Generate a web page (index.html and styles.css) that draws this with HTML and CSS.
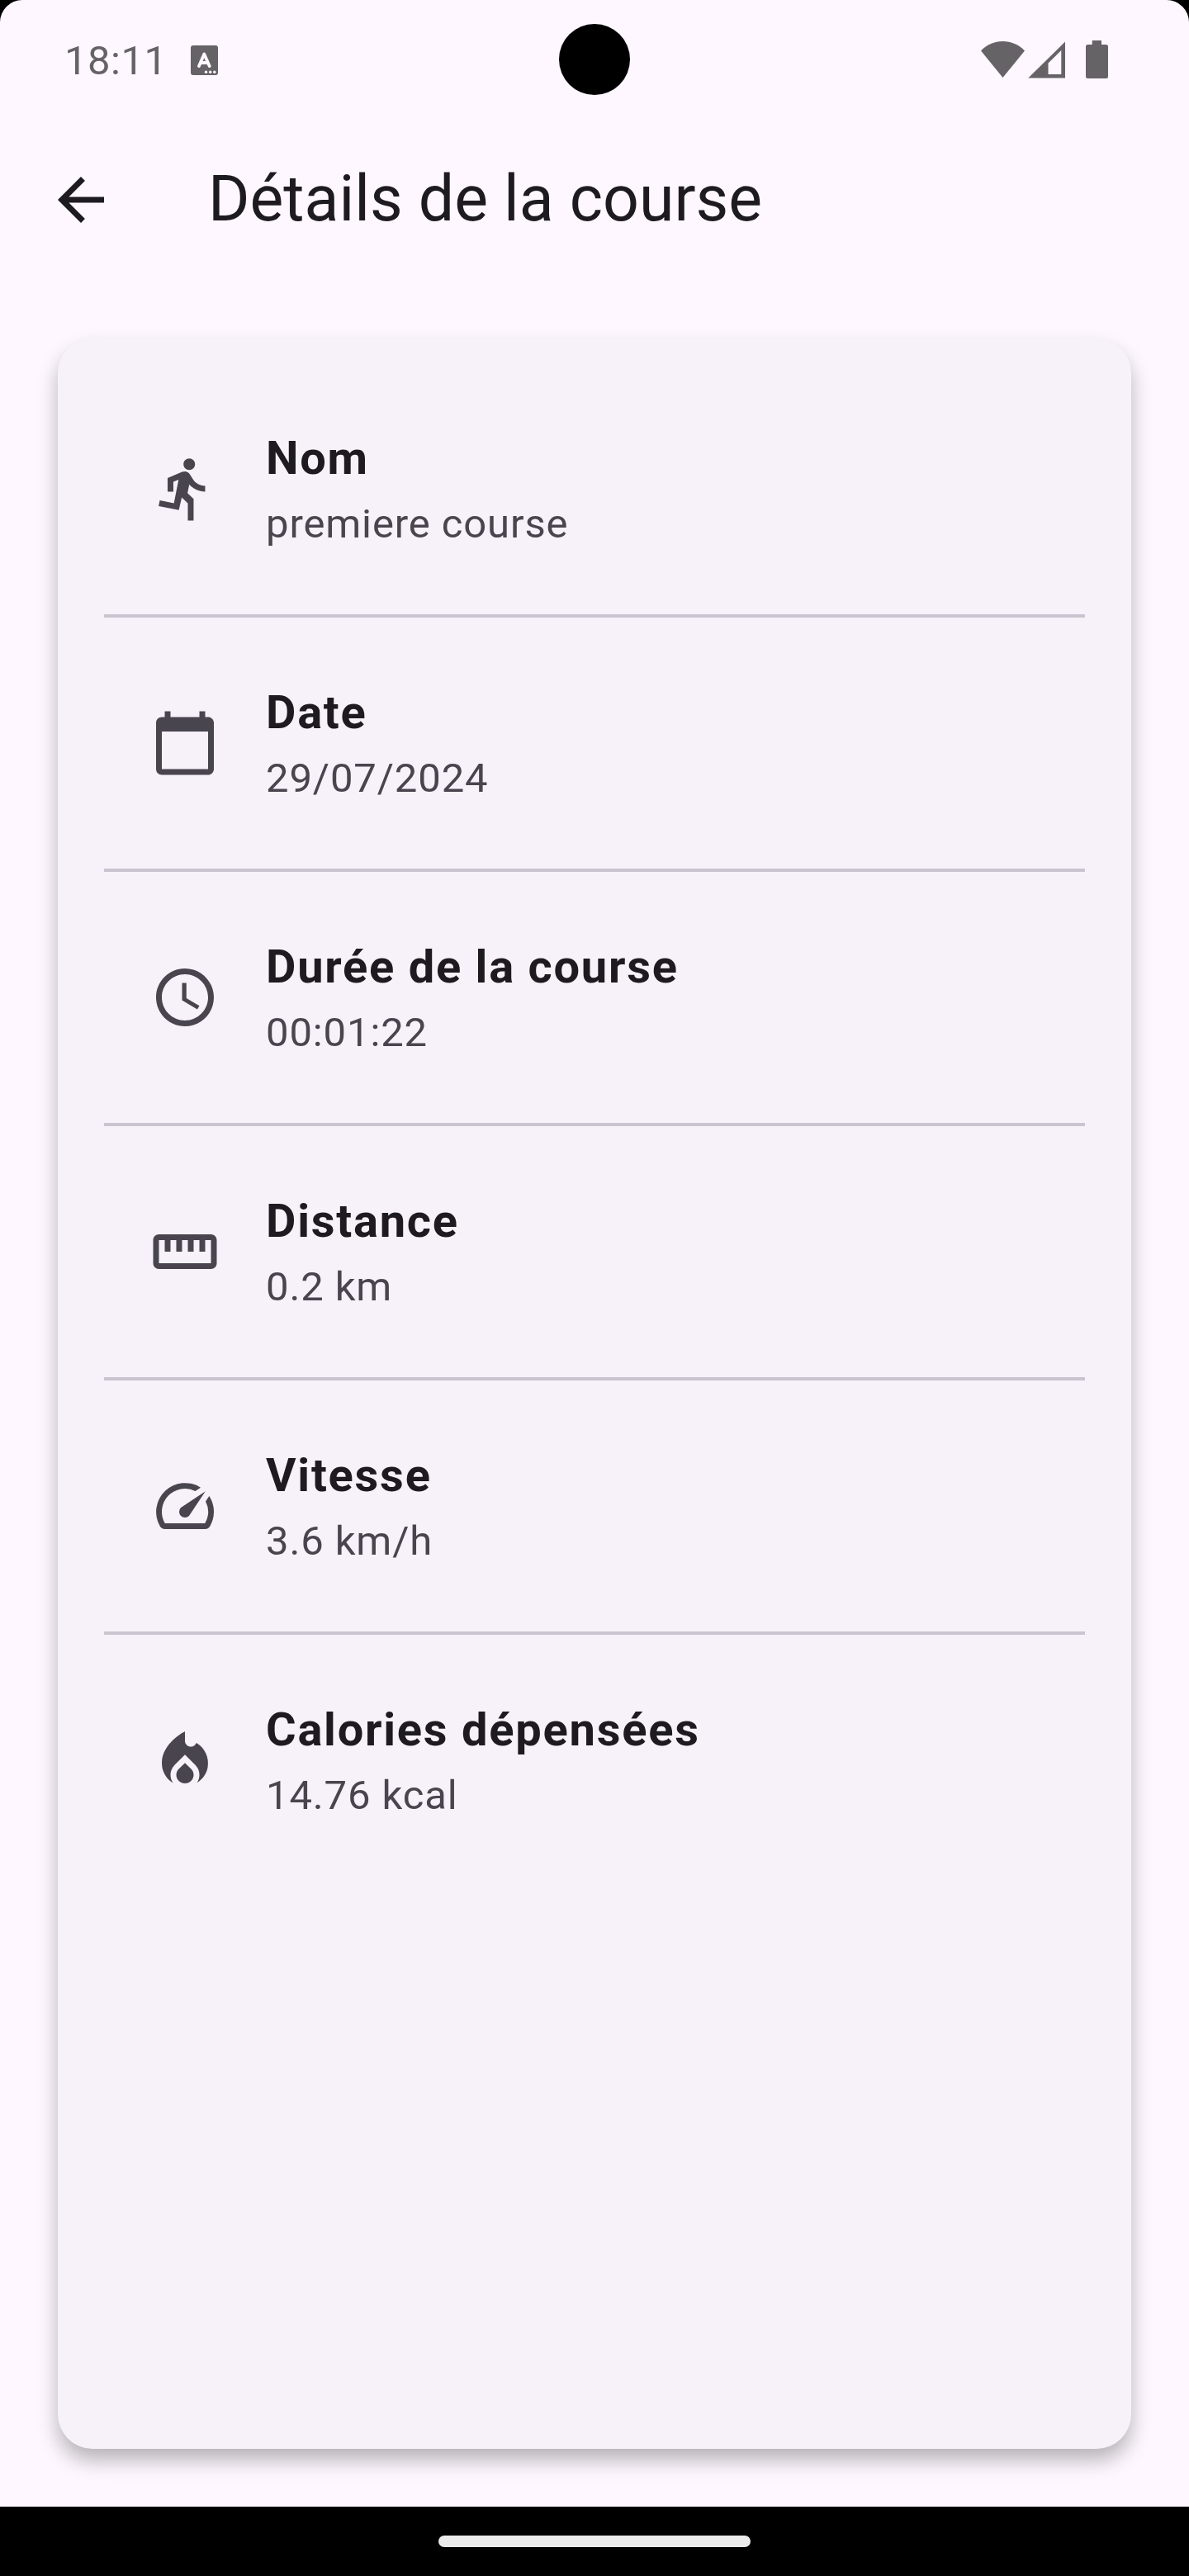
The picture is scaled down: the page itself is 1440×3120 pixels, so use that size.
FILE: index.html
```html
<!DOCTYPE html>
<html lang="fr">
<head>
<meta charset="utf-8">
<title>Détails de la course</title>
<link rel="stylesheet" href="styles.css">
</head>
<body>
<div class="phone">
  <main class="screen">
    <div class="camera"></div>
    <div class="status-bar">
      <span class="clock">18:11</span>
      <svg class="notif-icon" viewBox="0 0 33 36"><rect width="33" height="36" rx="3"/><path class="stroke" d="M10 25 16.3 10.500 22.700 25M12.500 21H20"/><g class="dots"><circle cx="18.500" cy="32.200" r="1.700"/><circle cx="23.700" cy="32.200" r="1.700"/><circle cx="28.800" cy="32.200" r="1.700"/></g></svg>
      <svg class="system-icons" viewBox="0 0 156 48">
        <path d="M0 13.500C7 6 16.500 2 26.500 2S46 6 53 13.500L26.500 46Z"/>
        <path fill-rule="evenodd" d="M57.300 46.600H102V2.600ZM81.500 28.500V42H97.300V13Z"/>
        <path d="M134.700 1H146V6H151.500Q154 6 154 8.500V44.500Q154 47 151.500 47H129.500Q127 47 127 44.500V8.500Q127 6 129.500 6H134.700Z"/>
      </svg>
    </div>
    <header class="app-bar">
      <svg class="icon back" viewBox="0 0 24 24"><path d="M20 11H7.830l5.590-5.590L12 4l-8 8 8 8 1.410-1.410L7.830 13H20v-2z"/></svg>
      <h1 class="page-title">Détails de la course</h1>
    </header>
    <section class="card">
      <div class="row">
        <svg class="icon" viewBox="0 0 24 24"><path d="M13.490 5.480c1.100 0 2-.9 2-2s-.9-2-2-2-2 .9-2 2 .9 2 2 2zm-3.600 13.900l1-4.400 2.100 2v6h2v-7.500l-2.100-2 .6-3c1.300 1.500 3.300 2.500 5.500 2.500v-2c-1.900 0-3.500-1-4.300-2.400l-1-1.600c-.4-.6-1-1-1.700-1-.3 0-.5.1-.8.1l-5.200 2.200v4.700h2v-3.400l1.800-.7-1.600 8.100-4.900-1-.4 2 7 1.400z"/></svg>
        <div class="texts"><div class="label">Nom</div><div class="value">premiere course</div></div>
      </div>
      <div class="divider"></div>
      <div class="row">
        <svg class="icon" viewBox="0 0 24 24"><path d="M20 3h-1V1h-2v2H7V1H5v2H4c-1.100 0-2 .9-2 2v16c0 1.100.9 2 2 2h16c1.100 0 2-.9 2-2V5c0-1.100-.9-2-2-2zm0 18H4V8h16v13z"/></svg>
        <div class="texts"><div class="label">Date</div><div class="value">29/07/2024</div></div>
      </div>
      <div class="divider"></div>
      <div class="row">
        <svg class="icon" viewBox="0 0 24 24"><path d="M11.990 2C6.470 2 2 6.480 2 12s4.470 10 9.990 10C17.520 22 22 17.520 22 12S17.520 2 11.990 2zM12 20c-4.420 0-8-3.580-8-8s3.580-8 8-8 8 3.580 8 8-3.580 8-8 8zm.5-13H11v6l5.250 3.150.75-1.230-4.500-2.670z"/></svg>
        <div class="texts"><div class="label">Durée de la course</div><div class="value">00:01:22</div></div>
      </div>
      <div class="divider"></div>
      <div class="row">
        <svg class="icon" viewBox="0 0 24 24"><path d="M21 6H3c-1.100 0-2 .9-2 2v8c0 1.100.9 2 2 2h18c1.100 0 2-.9 2-2V8c0-1.100-.9-2-2-2zm0 10H3V8h2v4h2V8h2v4h2V8h2v4h2V8h2v4h2V8h2v8z"/></svg>
        <div class="texts"><div class="label">Distance</div><div class="value">0.2 km</div></div>
      </div>
      <div class="divider"></div>
      <div class="row">
        <svg class="icon" viewBox="0 0 24 24"><path d="M20.380 8.570l-1.230 1.850a8 8 0 0 1-.22 7.580H5.070A8 8 0 0 1 15.580 6.850l1.850-1.230A10 10 0 0 0 3.350 19a2 2 0 0 0 1.720 1h13.850a2 2 0 0 0 1.740-1 10 10 0 0 0-.27-10.440zm-9.790 6.840a2 2 0 0 0 2.830 0l5.660-8.490-8.490 5.660a2 2 0 0 0 0 2.830z"/></svg>
        <div class="texts"><div class="label">Vitesse</div><div class="value">3.6 km/h</div></div>
      </div>
      <div class="divider"></div>
      <div class="row">
        <svg class="icon" viewBox="0 0 24 24"><path d="M12 12.900l-2.130 2.090c-.56.560-.87 1.290-.87 2.070C9 18.680 10.350 20 12 20s3-1.320 3-2.940c0-.78-.31-1.520-.87-2.070L12 12.900z"/><path d="M16 6l-.44.550C14.380 8.020 12 7.190 12 5.300V2S4 6 4 13c0 2.920 1.560 5.470 3.890 6.860-.56-.79-.89-1.760-.89-2.800 0-1.320.52-2.560 1.470-3.500L12 10.100l3.530 3.470c.95.930 1.470 2.170 1.470 3.500 0 1.020-.31 1.960-.85 2.750 1.890-1.150 3.290-3.060 3.710-5.300.66-3.550-1.070-6.900-3.860-8.520z"/></svg>
        <div class="texts"><div class="label">Calories dépensées</div><div class="value">14.76 kcal</div></div>
      </div>
    </section>
  </main>
  <footer class="nav-bar"><div class="nav-handle"></div></footer>
</div>
</body>
</html>
```
FILE: styles.css
```css
* {
  box-sizing: border-box;
}

body {
  margin: 0;
  background: #000;
  font-family: Roboto, "Liberation Sans", sans-serif;
  color: #1d1b20;
}

.phone {
  display: flex;
  flex-direction: column;
  width: 1440px;
  height: 3120px;
  background: #000;
}

.screen {
  position: relative;
  flex: 1;
  display: flex;
  flex-direction: column;
  background: #fef7ff;
  border-radius: 27px 27px 0 0;
}

.camera {
  position: absolute;
  top: 29px;
  left: 677px;
  width: 86px;
  height: 86px;
  border-radius: 50%;
  background: #000;
}

.status-bar {
  display: flex;
  align-items: flex-start;
  height: 144px;
  padding: 48px 96px 0 78px;
  color: #666367;
  fill: #666367;
}

.clock {
  width: 153px;
  font-size: 49px;
  line-height: 52px;
  letter-spacing: 0.5px;
}

.notif-icon {
  width: 33px;
  height: 36px;
  margin-top: 7px;
}

.notif-icon .stroke {
  fill: none;
  stroke: #fef7ff;
  stroke-width: 3.8;
  stroke-linecap: round;
  stroke-linejoin: round;
}

.notif-icon .dots {
  fill: #fef7ff;
}

.system-icons {
  width: 156px;
  height: 48px;
  margin-left: auto;
}

.app-bar {
  display: flex;
  align-items: center;
  height: 196px;
  padding-left: 56px;
}

.icon {
  flex: none;
  width: 84px;
  height: 84px;
  fill: #49454f;
}

.icon.back {
  fill: #1d1b20;
}

.page-title {
  margin: 0 0 2px 112px;
  font-size: 77px;
  font-weight: 400;
  line-height: 98px;
}

.card {
  flex: 1;
  margin: 70px;
  padding: 56px;
  border-radius: 42px;
  background: #f7f2fa;
  box-shadow: 0 14px 24px rgba(0, 0, 0, 0.28);
}

.row {
  display: flex;
  align-items: center;
  gap: 56px;
  height: 252px;
  padding: 0 56px;
}

.texts {
  margin-top: -1px;
}

.label {
  font-size: 56px;
  font-weight: 700;
  line-height: 84px;
  letter-spacing: 1.75px;
}

.value {
  margin-top: 3px;
  font-size: 49px;
  line-height: 70px;
  letter-spacing: 0.875px;
  color: #49454f;
}

.divider {
  height: 4px;
  margin: 26px 0;
  background: #cac4d0;
}

.nav-bar {
  display: flex;
  justify-content: center;
  height: 84px;
  padding-top: 35px;
}

.nav-handle {
  width: 378px;
  height: 14px;
  border-radius: 7px;
  background: #ebebeb;
}
```
